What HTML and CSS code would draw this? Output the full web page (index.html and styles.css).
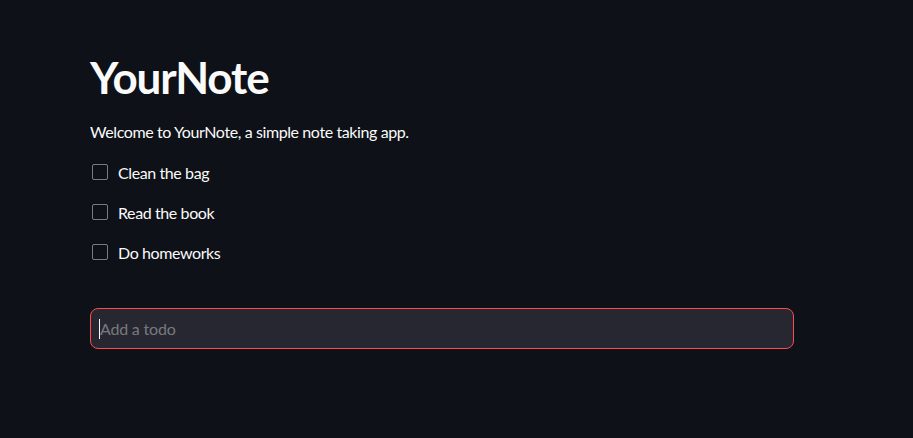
FILE: index.html
```html
<!DOCTYPE html>
<html lang="en">
<head>
<meta charset="utf-8">
<title>YourNote</title>
<link rel="stylesheet" href="styles.css">
</head>
<body>
<main class="container">
  <h1 class="title">YourNote</h1>
  <p class="intro">Welcome to YourNote, a simple note taking app.</p>
  <ul class="todos">
    <li class="todo"><span class="box"></span><span class="label">Clean the bag</span></li>
    <li class="todo"><span class="box"></span><span class="label">Read the book</span></li>
    <li class="todo"><span class="box"></span><span class="label">Do homeworks</span></li>
  </ul>
  <div class="field">
    <span class="caret"></span><span class="placeholder">Add a todo</span>
  </div>
</main>
</body>
</html>
```

FILE: styles.css
```css
html, body {
  margin: 0;
  padding: 0;
  background: #0e1117;
  color: #fafafa;
  font-family: "Lato", "Open Sans", sans-serif;
}
.container {
  width: 704px;
  padding: 50px 0 0 90px;
}
.title {
  margin: 0;
  font-size: 44px;
  font-weight: 700;
  line-height: 54px;
  letter-spacing: -1.1px;
}
.intro {
  margin: 16px 0 0;
  font-size: 16px;
  line-height: 24px;
  letter-spacing: -0.4px;
}
.todos {
  list-style: none;
  margin: 16px 0 0;
  padding: 0;
  display: flex;
  flex-direction: column;
  gap: 16px;
}
.todo {
  display: flex;
  align-items: center;
  height: 24px;
  font-size: 16px;
  letter-spacing: -0.4px;
  padding-left: 2px;
}
.box {
  width: 14px;
  height: 14px;
  border: 1px solid rgba(250, 250, 250, 0.45);
  border-radius: 2px;
  margin-right: 10px;
}
.field {
  margin-top: 44px;
  height: 39px;
  border: 1px solid #ff4b4b;
  border-radius: 8px;
  background: #262730;
  display: flex;
  align-items: center;
  padding-left: 8px;
  font-size: 16px;
}
.caret {
  width: 1px;
  height: 20px;
  background: #fafafa;
}
.placeholder {
  color: rgba(250, 250, 250, 0.4);
  letter-spacing: -0.2px;
}
```
